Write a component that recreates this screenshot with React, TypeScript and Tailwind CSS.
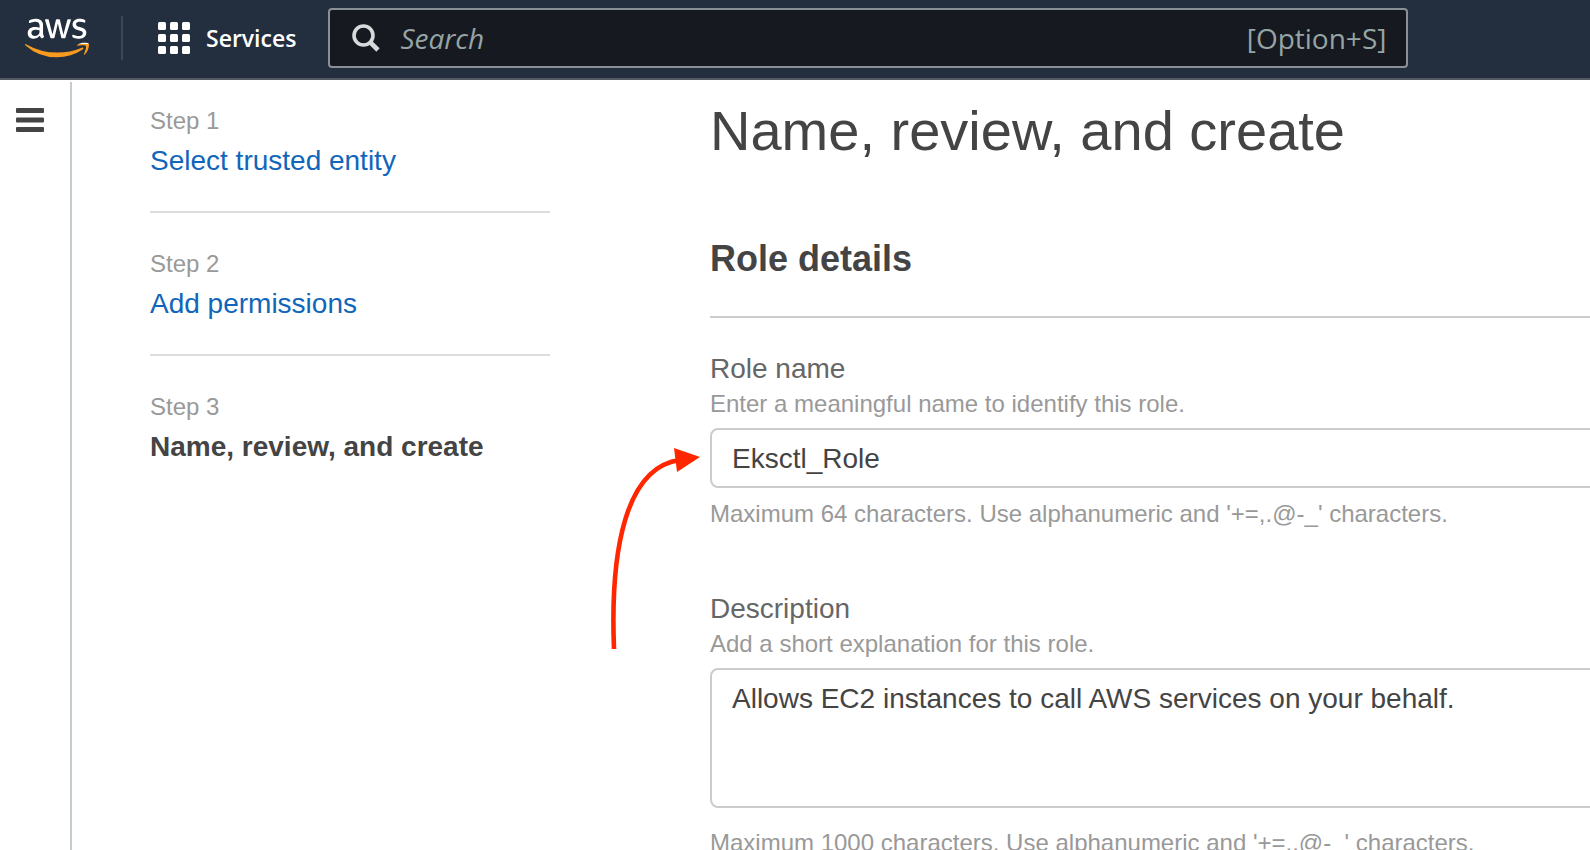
import React from "react";
import { FaAws } from "react-icons/fa";

const steps = [
  { step: "Step 1", title: "Select trusted entity" },
  { step: "Step 2", title: "Add permissions" },
  { step: "Step 3", title: "Name, review, and create", current: true },
];

function AwsLogo() {
  return (
    <a href="#home" aria-label="AWS home" className="block shrink-0">
      <svg width="0" height="0" className="absolute" aria-hidden="true">
        <defs>
          <linearGradient id="aws-fill" gradientUnits="userSpaceOnUse" x1="0" y1="0" x2="0" y2="512">
            <stop offset="0.61" stopColor="#ffffff" />
            <stop offset="0.61" stopColor="#f79a1e" />
          </linearGradient>
        </defs>
      </svg>
      <FaAws className="h-[52px] w-16 [fill:url(#aws-fill)]" aria-hidden="true" />
    </a>
  );
}

function ServicesIcon() {
  const cells = [0, 12, 24];
  return (
    <svg width="32" height="32" viewBox="0 0 32 32" fill="#ffffff" aria-hidden="true">
      {cells.map((y) => cells.map((x) => <rect key={`${x}-${y}`} x={x} y={y} width="8" height="8" rx="1.5" />))}
    </svg>
  );
}

function Header() {
  return (
    <header className="flex h-20 shrink-0 items-center border-b-2 border-[#545b64] bg-[#232f3e] pb-0.5 pl-[25px] font-['Open_Sans','Noto_Sans',sans-serif]">
      <AwsLogo />
      <div className="ml-8 h-11 w-0.5 shrink-0 bg-[#414750]" />
      <button type="button" className="ml-[35px] flex shrink-0 items-center gap-4 text-[23px] font-semibold text-white">
        <ServicesIcon />
        Services
      </button>
      <div className="mr-6 ml-8 flex h-[60px] max-w-[1080px] flex-1 items-center rounded-sm border-2 border-[#879196] bg-[#16191f] pr-5 pl-[22px]">
        <svg width="28" height="28" viewBox="0 0 28 28" fill="none" stroke="#d5dbdb" aria-hidden="true" className="shrink-0">
          <circle cx="11.5" cy="11.5" r="9.5" strokeWidth="3.6" />
          <path d="M18.3 18.3 L26 26" strokeWidth="4.6" />
        </svg>
        <input
          type="search"
          aria-label="Search"
          placeholder="Search"
          className="ml-5 min-w-0 flex-1 bg-transparent text-[28px] text-white outline-none placeholder:text-[#95a5a6] placeholder:italic placeholder:opacity-100"
        />
        <span className="text-[28px] text-[#95a5a6]">[Option+S]</span>
      </div>
    </header>
  );
}

function Steps() {
  return (
    <nav aria-label="Steps" className="w-[400px] shrink-0 pt-[25px]">
      <ol className="divide-y-2 divide-[#dddddd]">
        {steps.map((s) => (
          <li key={s.step} className="pb-8 [&:not(:first-child)]:pt-[35px]">
            <div className="text-2xl leading-8 text-[#999999]">{s.step}</div>
            <div className="mt-1.5 text-[28px] leading-9">
              {s.current ? (
                <span aria-current="step" className="font-bold text-[#444444]">{s.title}</span>
              ) : (
                <a href="#step" className="text-[#1166bb]">{s.title}</a>
              )}
            </div>
          </li>
        ))}
      </ol>
    </nav>
  );
}

function Arrow() {
  return (
    <svg
      width="100"
      height="210"
      viewBox="0 0 100 210"
      aria-hidden="true"
      className="pointer-events-none absolute top-3 right-full mr-2"
    >
      <path d="M12 209 C8 109 24 27 78 20" fill="none" stroke="#ff2600" strokeWidth="4.6" />
      <path d="M72 8 L98 17 L75 32 Z" fill="#ff2600" />
    </svg>
  );
}

export default function App() {
  return (
    <div className="flex h-screen flex-col overflow-hidden bg-white font-['Liberation_Sans',Arial,sans-serif] text-[#444444]">
      <Header />
      <div className="flex min-h-0 flex-1">
        <aside className="mt-0.5 w-[72px] shrink-0 border-r-2 border-[#c5cccc] pt-[26px] pl-4">
          <button type="button" aria-label="Open navigation" className="block">
            <svg width="28" height="24" viewBox="0 0 28 24" fill="#444444" aria-hidden="true">
              <rect width="28" height="5" rx="1" />
              <rect y="9.5" width="28" height="5" rx="1" />
              <rect y="19" width="28" height="5" rx="1" />
            </svg>
          </button>
        </aside>
        <div className="flex min-w-0 flex-1 pl-[78px]">
          <Steps />
          <main className="-mr-10 ml-40 min-w-0 flex-1 pt-[19px]">
            <h1 className="text-[56px] leading-[64px]">Name, review, and create</h1>
            <form>
              <h2 className="mt-[72px] border-b-2 border-[#cccccc] pb-[33px] text-4xl leading-[48px] font-bold">Role details</h2>
              <div className="mt-8">
                <label htmlFor="role-name" className="block text-[28px] leading-[38px] text-[#666666]">Role name</label>
                <p className="text-2xl leading-8 text-[#999999]">Enter a meaningful name to identify this role.</p>
                <div className="relative mt-2">
                  <Arrow />
                  <input
                    id="role-name"
                    type="text"
                    defaultValue="Eksctl_Role"
                    className="block h-[60px] w-full rounded-lg border-2 border-[#cccccc] px-5 pt-0.5 text-[28px] text-[#444444]"
                  />
                </div>
                <p className="mt-2 text-2xl leading-9 text-[#999999]">Maximum 64 characters. Use alphanumeric and '+=,.@-_' characters.</p>
              </div>
              <div className="mt-[58px]">
                <label htmlFor="description" className="block text-[28px] leading-[38px] text-[#666666]">Description</label>
                <p className="text-2xl leading-8 text-[#999999]">Add a short explanation for this role.</p>
                <textarea
                  id="description"
                  defaultValue="Allows EC2 instances to call AWS services on your behalf."
                  className="mt-2 block h-[140px] w-full resize-none rounded-lg border-2 border-[#cccccc] px-5 py-2.5 text-[28px] leading-[38px] text-[#444444]"
                />
                <p className="mt-4 text-2xl leading-[38px] text-[#999999]">Maximum 1000 characters. Use alphanumeric and '+=,.@-_' characters.</p>
              </div>
            </form>
          </main>
        </div>
      </div>
    </div>
  );
}
